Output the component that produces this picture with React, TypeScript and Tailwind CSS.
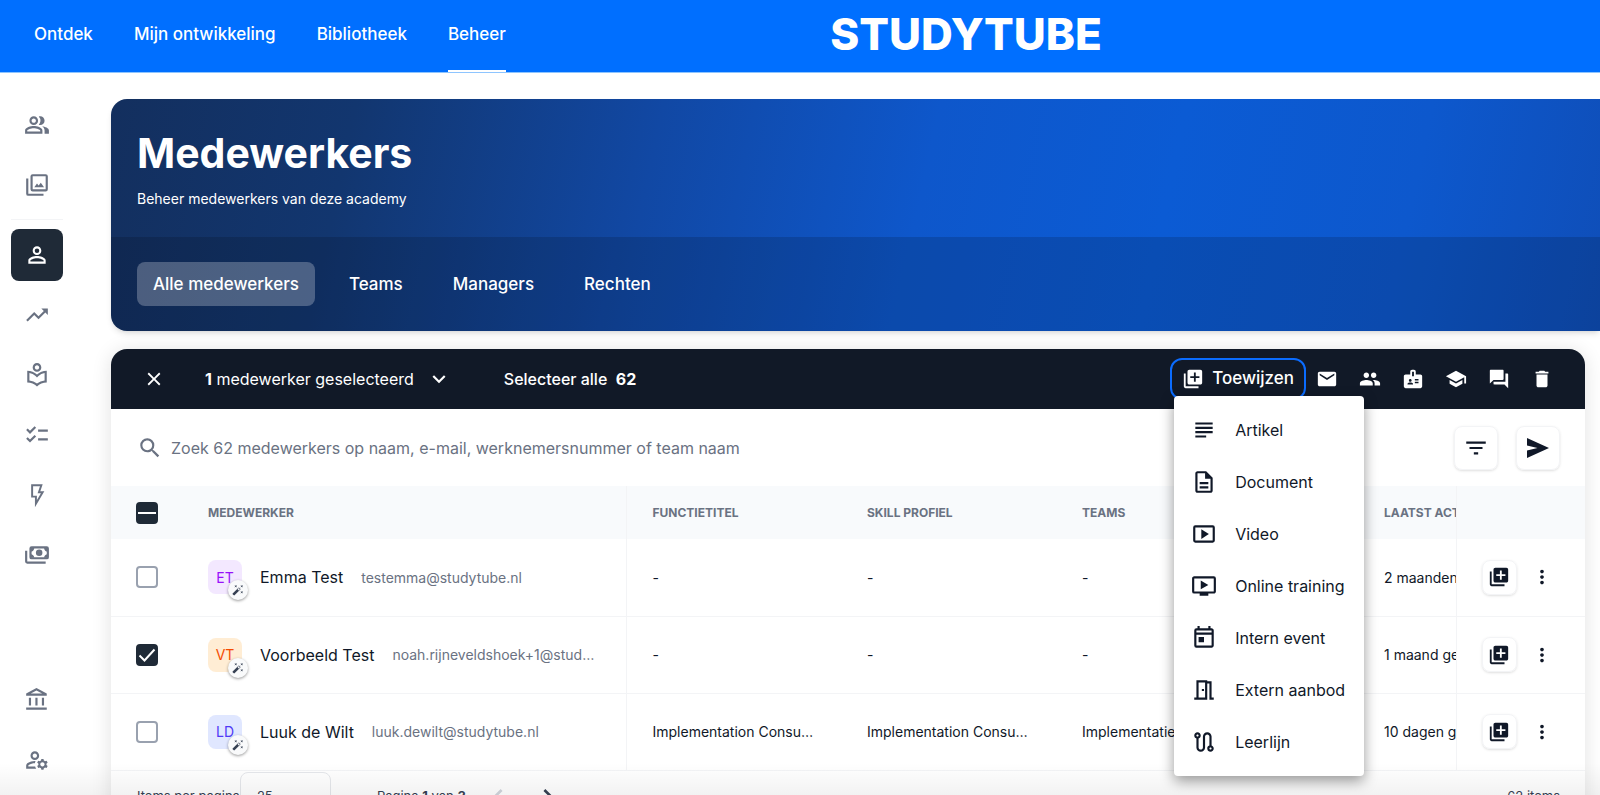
import React from "react";
import {
  MdOutlinePeopleAlt, MdPersonOutline, MdTrendingUp, MdOutlineLocalLibrary, MdChecklist,
  MdOutlineAccountBalance, MdOutlineManageAccounts, MdClose, MdKeyboardArrowDown,
  MdMail, MdPeople, MdBadge, MdSchool, MdQuestionAnswer, MdDelete, MdSubject,
  MdOutlineDescription, MdOndemandVideo, MdOutlineToday, MdOutlineMeetingRoom, MdOutlineRoute,
  MdFilterList, MdAutoFixHigh, MdMoreVert, MdSearch, MdChevronLeft, MdChevronRight,
  MdLibraryAdd, MdArrowDropDown,
} from "react-icons/md";

type IconProps = { className?: string };

function GalleryIcon({ className }: IconProps) {
  return (
    <svg viewBox="0 0 24 24" className={className} fill="none" stroke="currentColor" strokeWidth="2" aria-hidden="true">
      <rect x="7" y="3" width="14" height="14" rx="1" />
      <path d="M3 6v14a1 1 0 0 0 1 1h14" />
      <path d="M9.500 14l2.500-3.300 1.500 1.700L15.500 10l3 4z" fill="currentColor" stroke="none" />
    </svg>
  );
}

function BoltIcon({ className }: IconProps) {
  return (
    <svg viewBox="0 0 24 24" className={className} fill="none" stroke="currentColor" strokeWidth="1.8" aria-hidden="true">
      <path d="M7.500 3h8.500l-2.200 6.500h3.400L11 20v-6.500H7.500z" />
    </svg>
  );
}

function CashIcon({ className }: IconProps) {
  return (
    <svg viewBox="0 0 24 24" className={className} fill="none" stroke="currentColor" strokeWidth="2" aria-hidden="true">
      <rect x="6" y="5" width="16" height="10" rx="1" />
      <path d="M2 8v10a1 1 0 0 0 1 1h17" />
      <circle cx="14" cy="10" r="3" fill="currentColor" stroke="none" />
      <path d="M6 9a4 4 0 0 0 3.500-3.500H6zM22 9a4 4 0 0 1-3.500-3.500H22zM6 11a4 4 0 0 1 3.500 3.500H6zM22 11a4 4 0 0 0-3.500 3.500H22z" fill="currentColor" stroke="none" />
    </svg>
  );
}

function VideoIcon({ className }: IconProps) {
  return (
    <svg viewBox="0 0 24 24" className={className} fill="none" stroke="currentColor" strokeWidth="2" aria-hidden="true">
      <rect x="3" y="5" width="18" height="14" rx="1" />
      <path d="M9.500 7.500v9l7-4.500z" fill="currentColor" stroke="none" />
    </svg>
  );
}

function SendIcon({ className }: IconProps) {
  return (
    <svg viewBox="0 0 24 24" className={className} fill="currentColor" aria-hidden="true">
      <path d="M1 2l22 10L1 22v-7.600L11.500 12 1 9.600z" />
    </svg>
  );
}

const mainNav = ["Ontdek", "Mijn ontwikkeling", "Bibliotheek", "Beheer"];
const heroTabs = ["Alle medewerkers", "Teams", "Managers", "Rechten"];

const sideTop = [
  { label: "Gebruikers", Icon: MdOutlinePeopleAlt },
  { label: "Media", Icon: GalleryIcon },
];
const sideMain = [
  { label: "Medewerkers", Icon: MdPersonOutline },
  { label: "Statistieken", Icon: MdTrendingUp },
  { label: "Leeraanbod", Icon: MdOutlineLocalLibrary },
  { label: "Taken", Icon: MdChecklist },
  { label: "Automatisering", Icon: BoltIcon },
  { label: "Budgetten", Icon: CashIcon },
];
const sideBottom = [
  { label: "Academy", Icon: MdOutlineAccountBalance },
  { label: "Accountbeheer", Icon: MdOutlineManageAccounts },
];

const bulkActions = [
  { label: "E-mail sturen", Icon: MdMail },
  { label: "Team wijzigen", Icon: MdPeople },
  { label: "Functie wijzigen", Icon: MdBadge },
  { label: "Opleiding", Icon: MdSchool },
  { label: "Gesprek", Icon: MdQuestionAnswer },
  { label: "Verwijderen", Icon: MdDelete },
];

const assignMenu = [
  { label: "Artikel", Icon: MdSubject },
  { label: "Document", Icon: MdOutlineDescription },
  { label: "Video", Icon: VideoIcon },
  { label: "Online training", Icon: MdOndemandVideo },
  { label: "Intern event", Icon: MdOutlineToday },
  { label: "Extern aanbod", Icon: MdOutlineMeetingRoom },
  { label: "Leerlijn", Icon: MdOutlineRoute },
];

const employees = [
  { initials: "ET", tone: "bg-purple-100 text-purple-600", name: "Emma Test", email: "testemma@studytube.nl", title: "-", skill: "-", team: "-", active: "2 maanden geleden", checked: false },
  { initials: "VT", tone: "bg-orange-100 text-orange-600", name: "Voorbeeld Test", email: "noah.rijneveldshoek+1@studytube.nl", title: "-", skill: "-", team: "-", active: "1 maand geleden", checked: true },
  { initials: "LD", tone: "bg-indigo-100 text-indigo-600", name: "Luuk de Wilt", email: "luuk.dewilt@studytube.nl", title: "Implementation Consultant", skill: "Implementation Consultant", team: "Implementatie", active: "10 dagen geleden", checked: false },
];

function SideLink({ label, Icon, active }: { label: string; Icon: React.ComponentType<IconProps>; active?: boolean }) {
  return (
    <a
      href="#"
      aria-label={label}
      className={
        active
          ? "flex size-13 items-center justify-center rounded-lg bg-[#1f2a37] text-white"
          : "flex size-13 items-center justify-center rounded-lg text-gray-500"
      }
    >
      <Icon className="size-[26px]" />
    </a>
  );
}

function Tick({ label, checked, mixed }: { label: string; checked?: boolean; mixed?: boolean }) {
  return (
    <label className="relative block size-[22px]">
      <input
        type="checkbox"
        aria-label={label}
        defaultChecked={checked || mixed}
        className="peer block size-[22px] appearance-none rounded border-2 border-gray-400 bg-white checked:border-[#1f2a37] checked:bg-[#1f2a37]"
      />
      <svg viewBox="0 0 22 22" fill="none" stroke="white" strokeWidth="2" aria-hidden="true" className="pointer-events-none absolute inset-0 size-[22px] opacity-0 peer-checked:opacity-100">
        <path d={mixed ? "M2 11h18" : "M3.500 11.500l5 5L18.500 5.500"} />
      </svg>
    </label>
  );
}

function Header() {
  return (
    <header className="grid h-[73px] shrink-0 grid-cols-[5fr_auto_3fr] border-b border-blue-300 bg-[#006fff] text-white">
      <nav className="col-start-1 flex gap-[41px] pl-[34px]">
        {mainNav.map((item) => (
          <a
            key={item}
            href="#"
            className={
              item === "Beheer"
                ? "flex items-center whitespace-nowrap border-b-2 border-white text-[17px] font-medium"
                : "flex items-center whitespace-nowrap border-b-2 border-transparent text-[17px] font-medium"
            }
          >
            {item}
          </a>
        ))}
      </nav>
      <a href="#" className="self-center pb-1 text-[44px] leading-none font-extrabold">STUDYTUBE</a>
    </header>
  );
}

function Hero() {
  return (
    <section className="rounded-l-2xl bg-[linear-gradient(102deg,#132f5e_0%,#12366f_16%,#1148a4_36%,#0e57cb_54%,#0b5bd4_70%,#0d58cd_86%,#0f4eb8_100%)] text-white shadow-md">
      <div className="flex h-[138px] flex-col pt-8 pl-[26px]">
        <h1 className="text-[41px] leading-[44px] font-bold">Medewerkers</h1>
        <p className="mt-[14px] text-[14px] leading-5">Beheer medewerkers van deze academy</p>
      </div>
      <nav className="flex h-[94px] items-center gap-[18px] rounded-bl-2xl bg-black/15 pl-[26px]">
        {heroTabs.map((tab, i) => (
          <a
            key={tab}
            href="#"
            className={
              i === 0
                ? "rounded-lg bg-white/25 px-4 py-[10px] text-[17px] leading-6 font-medium"
                : "rounded-lg px-4 py-[10px] text-[17px] leading-6 font-medium"
            }
          >
            {tab}
          </a>
        ))}
      </nav>
    </section>
  );
}

function AssignMenu() {
  return (
    <div role="menu" className="absolute top-[38px] left-1 z-10 w-[190px] rounded bg-white py-2 text-gray-900 shadow-[0_5px_14px_rgba(0,0,0,0.4)]">
      {assignMenu.map(({ label, Icon }) => (
        <button key={label} role="menuitem" type="button" className="flex h-[52px] w-full items-center gap-[18px] pl-[17px] text-left text-[16px] whitespace-nowrap">
          <Icon className="size-[26px] shrink-0" />
          {label}
        </button>
      ))}
    </div>
  );
}

function Toolbar() {
  return (
    <div className="flex h-[60px] items-center rounded-t-2xl bg-[#111927] pr-8 pl-8 text-[16px] text-white">
      <button type="button" aria-label="Selectie wissen"><MdClose className="size-[22px]" /></button>
      <button type="button" className="ml-10 flex items-center gap-3">
        <span><b>1</b> medewerker geselecteerd</span>
        <MdKeyboardArrowDown className="size-[26px]" />
      </button>
      <button type="button" className="ml-13 font-medium">Selecteer alle&nbsp; <b>62</b></button>
      <div className="relative ml-auto">
        <button type="button" aria-haspopup="menu" aria-expanded="true" className="flex h-[42px] items-center gap-2 rounded-xl border-2 border-[#0b6cff] px-[10px] text-[17px] font-medium">
          <MdLibraryAdd className="size-[22px]" />
          Toewijzen
        </button>
        <AssignMenu />
      </div>
      <div className="ml-[10px] flex gap-[21px]">
        {bulkActions.map(({ label, Icon }) => (
          <button key={label} type="button" aria-label={label}><Icon className="size-[22px]" /></button>
        ))}
      </div>
    </div>
  );
}

function EmployeeTable() {
  return (
    <table className="w-full table-fixed border-collapse text-left text-[14px] text-gray-900">
      <colgroup>
        <col className="w-[97px]" />
        <col className="w-[418px]" />
        <col className="w-[215px]" />
        <col className="w-[215px]" />
        <col />
        <col className="w-[98px]" />
        <col className="w-[129px]" />
      </colgroup>
      <thead>
        <tr className="h-[53px] bg-[#f8fafc] text-[12px] text-gray-500">
          <th className="pl-[25px]"><Tick label="Alles selecteren" mixed /></th>
          <th className="border-r border-gray-100">MEDEWERKER</th>
          <th className="pl-[26px]">FUNCTIETITEL</th>
          <th className="pl-[26px]">SKILL PROFIEL</th>
          <th className="pl-[26px]">TEAMS</th>
          <th className="overflow-hidden border-r border-gray-100 pl-[26px] whitespace-nowrap">LAATST ACTIEF</th>
          <th aria-label="Acties" />
        </tr>
      </thead>
      <tbody>
        {employees.map((e) => (
          <tr key={e.name} className="h-[77px] border-b border-gray-100">
            <td className="pl-[25px]"><Tick label={e.name} checked={e.checked} /></td>
            <td className="border-r border-gray-100 pr-6">
              <div className="flex items-center">
                <span className={`relative flex size-[34px] shrink-0 items-center justify-center rounded-lg ${e.tone}`}>
                  {e.initials}
                  <span className="absolute top-5 left-5 flex size-5 items-center justify-center rounded-full bg-gray-50 text-gray-700 shadow-[0_1px_3px_rgba(0,0,0,0.4)]">
                    <MdAutoFixHigh className="size-3" />
                  </span>
                </span>
                <span className="ml-[18px] text-[16px] whitespace-nowrap">{e.name}</span>
                <span className="ml-[18px] truncate text-gray-500">{e.email}</span>
              </div>
            </td>
            <td className="truncate pr-[26px] pl-[26px]">{e.title}</td>
            <td className="truncate pr-[26px] pl-[26px]">{e.skill}</td>
            <td className="truncate pr-[26px] pl-[26px]">{e.team}</td>
            <td className="overflow-hidden border-r border-gray-100 pl-[26px] whitespace-nowrap">{e.active}</td>
            <td className="pl-[25px]">
              <div className="flex items-center gap-[14px]">
                <button type="button" aria-label="Toewijzen" className="flex size-[35px] items-center justify-center rounded-lg border border-gray-100 shadow-sm">
                  <MdLibraryAdd className="size-[22px]" />
                </button>
                <button type="button" aria-label="Meer"><MdMoreVert className="size-[22px]" /></button>
              </div>
            </td>
          </tr>
        ))}
      </tbody>
    </table>
  );
}

export default function App() {
  return (
    <div className="relative flex h-screen flex-col overflow-hidden bg-white font-[Inter,sans-serif] text-gray-900">
      <Header />
      <div className="flex min-h-0 flex-1">
        <aside className="flex w-[111px] shrink-0 flex-col gap-2 pt-[26px] pb-[9px] pl-[11px]">
          {sideTop.map((s) => <SideLink key={s.label} {...s} />)}
          <hr className="mb-px w-13 border-gray-100" />
          {sideMain.map((s, i) => <SideLink key={s.label} {...s} active={i === 0} />)}
          <div className="mt-auto flex flex-col gap-2">
            {sideBottom.map((s) => <SideLink key={s.label} {...s} />)}
          </div>
        </aside>
        <main className="min-w-0 flex-1 pt-[26px]">
          <Hero />
          <section className="mt-[18px] mr-[15px] rounded-t-2xl bg-white shadow-[0_2px_20px_rgba(0,0,0,0.12)]">
            <Toolbar />
            <div className="flex h-[77px] items-center pr-[25px] pl-[26px]">
              <MdSearch className="size-[26px] text-gray-500" />
              <input
                type="search"
                aria-label="Zoek medewerkers"
                placeholder="Zoek 62 medewerkers op naam, e-mail, werknemersnummer of team naam"
                className="ml-2 min-w-0 flex-1 bg-transparent text-[16px] placeholder:text-gray-500"
              />
              <div className="flex gap-[18px]">
                <button type="button" aria-label="Filteren" className="flex size-11 items-center justify-center rounded-lg border border-gray-100 shadow-sm"><MdFilterList className="size-[26px]" /></button>
                <button type="button" aria-label="Versturen" className="flex size-11 items-center justify-center rounded-lg border border-gray-100 shadow-sm"><SendIcon className="size-6" /></button>
              </div>
            </div>
            <EmployeeTable />
            <footer className="flex items-center pt-px pr-[25px] pl-[26px] text-[13px] text-gray-700">
              <label htmlFor="page-size">Items per pagina</label>
              <div className="relative">
                <select id="page-size" defaultValue="25" className="block h-[50px] w-[91px] appearance-none rounded-lg border border-gray-200 pl-4">
                  <option>25</option>
                </select>
                <MdArrowDropDown className="pointer-events-none absolute top-[15px] right-3 size-5" />
              </div>
              <span className="ml-[46px]">Pagina <b>1</b> van <b>3</b></span>
              <button type="button" aria-label="Vorige" className="ml-4 text-gray-300"><MdChevronLeft className="size-8" /></button>
              <button type="button" aria-label="Volgende" className="ml-[18px]"><MdChevronRight className="size-8" /></button>
              <span className="ml-auto">62 items</span>
            </footer>
          </section>
        </main>
      </div>
      <div className="pointer-events-none absolute inset-x-0 bottom-0 h-8 bg-linear-to-t from-black/5 to-transparent" />
    </div>
  );
}
